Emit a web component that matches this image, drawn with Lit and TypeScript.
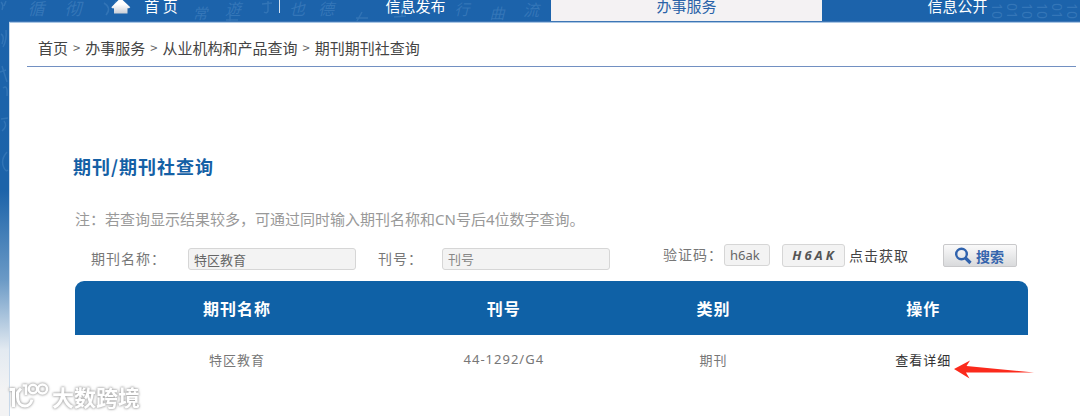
import { LitElement, html, css, svg } from "lit";
import { customElement, state } from "lit/decorators.js";

interface Row {
  name: string;
  code: string;
  kind: string;
}

// Faint calligraphy scattered over the blue backdrop: glyph, x, y, size
const SCRIPT: [string, number, number, number][] = [
  ["循", 36, 15, 17], ["彻", 73, 15, 17], ["常", 200, 19, 15],
  ["遊", 233, 15, 16], ["也", 297, 15, 16], ["德", 326, 15, 16],
  ["行", 462, 15, 15], ["曲", 497, 19, 15], ["流", 531, 16, 16],
];

// Brush strokes of the characters that run off the side strip
const STROKES = [
  "M1 2Q4 5 2 10M6 1 4 6",
  "M1 34Q5 36 2 44M6 30Q7 40 3 47",
  "M2 66 7 82M0 72 6 70M3 88Q8 84 7 96",
  "M1 119 8 118M4 121Q8 126 2 131",
  "M7 152Q0 160 4 168Q6 172 8 170",
  "M104 3Q112 8 106 15M116 1 113 9",
  "M262 4 272 3M268 1V11Q267 14 264 12",
  "M356 18H368M362 12 357 21",
  "M392 6Q398 4 396 14M402 4V17M394 17 406 16",
  "M226 20H238M230 15V21",
];

const BINARY: [string, number][] = [
  ["10", 997], ["01", 1012], ["10", 1027], ["10", 1042], ["01", 1057], ["10", 1072],
];

@customElement("app-root")
export class AppRoot extends LitElement {
  @state() private active = 2;

  private nav = ["首 页", "信息发布", "办事服务", "信息公开"];
  private rows: Row[] = [{ name: "特区教育", code: "44-1292/G4", kind: "期刊" }];

  static styles = css`
    :host {
      position: relative;
      min-height: 100vh;
      padding-left: 9px;
      box-sizing: border-box;
      overflow: hidden;
      display: flex;
      flex-direction: column;
      font-family: "Noto Sans", "Noto Sans CJK SC", sans-serif;
      color: #777;
      background: linear-gradient(#1c63ab 0, #1c63a9 190px, #6b9ac6 280px, #e3eaf1 350px, #f3f3f4 390px);
    }
    a { color: inherit; text-decoration: none; }
    .backdrop {
      position: absolute;
      left: 0;
      top: 0;
      width: 100%;
      height: 200px;
      pointer-events: none;
    }
    .backdrop text { fill: #7fb0e0; fill-opacity: 0.26; text-anchor: middle; }
    .backdrop path { fill: none; stroke: #7fb0e0; stroke-opacity: 0.22; stroke-width: 1.5; }
    .nav {
      position: relative;
      display: grid;
      grid-template-columns: repeat(4, 1fr);
      margin-right: -13px;
      border-bottom: 1px solid #3d76b5;
      font-family: "Noto Sans CJK SC", sans-serif;
      font-size: 15px;
      line-height: 12px;
      color: #fff;
    }
    .item {
      display: flex;
      justify-content: center;
      gap: 13px;
      padding-bottom: 9px;
    }
    .item:first-child { background: linear-gradient(#d5e3f2, #d5e3f2) right top / 1px 13px no-repeat; }
    .item.on { background: #f4f2f3; color: #2a62a8; }
    .house { width: 20px; height: 15px; margin-bottom: -3px; }
    .sheet {
      position: relative;
      flex: 1;
      background: #fff;
      border-left: 1px solid #c9daec;
      border-top: 1px solid #a9c6e4;
    }
    .crumbs {
      display: flex;
      gap: 5px;
      margin: 0 4px 0 17px;
      padding: 13px 11px 6px;
      border-bottom: 1px solid #7290c2;
      font-family: "Noto Sans CJK SC", sans-serif;
      font-size: 15px;
      line-height: 24px;
      color: #444;
    }
    .sep { font-size: 13px; color: #666; }
    .main { margin: 0 52px 0 65px; padding-top: 85px; }
    h1 {
      margin: 0 0 0 -2px;
      font-size: 18px;
      line-height: 28px;
      letter-spacing: 1px;
      color: #1460a5;
      font-family: "Noto Sans CJK SC", sans-serif;
    }
    .note {
      margin: 27px 0 0;
      font-size: 15px;
      line-height: 24px;
      color: #999;
    }
    .form {
      display: flex;
      align-items: flex-start;
      justify-content: space-between;
      padding: 13px 11px 11px 16px;
      font-size: 14px;
      line-height: 22px;
      letter-spacing: 1px;
    }
    .fields { display: flex; padding-top: 4px; }
    .check { display: flex; }
    .long { width: 97px; }
    .short { width: 64px; margin-left: 22px; }
    .code { width: 61px; }
    input {
      box-sizing: border-box;
      width: 168px;
      height: 22px;
      margin: 0;
      padding: 0 5px;
      border: 1px solid #d6d6d6;
      border-radius: 3px;
      background: #f3f3f3;
      font: 13px "Noto Sans", "Noto Sans CJK SC", sans-serif;
      color: #666;
      outline: none;
    }
    input::placeholder { color: #888; opacity: 1; }
    .check input { width: 46px; }
    .captcha {
      box-sizing: border-box;
      width: 63px;
      height: 23px;
      margin: 0 4px 0 12px;
      padding-left: 2px;
      border: 1px solid #d6d6d6;
      border-radius: 3px;
      background: #f3f3f3;
      font: italic bold 13px/21px "Noto Sans", sans-serif;
      letter-spacing: 3px;
      text-align: center;
      color: #555;
    }
    button { margin: 0; padding: 0; border: 0; background: none; font: inherit; cursor: pointer; }
    .fetch { letter-spacing: 1px; color: #444; }
    .search {
      display: flex;
      align-items: center;
      gap: 4px;
      box-sizing: border-box;
      width: 74px;
      height: 23px;
      margin-left: 34px;
      padding-left: 10px;
      border: 1px solid #c9c9cb;
      border-radius: 2px;
      background: linear-gradient(#fafafa, #d9dadc);
      font: bold 14px/20px "Noto Sans CJK SC", sans-serif;
      color: #3564ad;
    }
    .glass { width: 18px; height: 18px; }
    table {
      width: 100%;
      border-collapse: collapse;
      table-layout: fixed;
      font-size: 13px;
      letter-spacing: 1px;
      text-align: center;
    }
    th, td { padding: 0; }
    th {
      height: 54px;
      background: #0f61a6;
      font-size: 16px;
      color: #fff;
    }
    th:first-child { width: 34%; border-top-left-radius: 9px; }
    th:last-child { border-top-right-radius: 9px; }
    td { height: 48px; }
    .detail { position: relative; color: #333; }
    .arrow {
      position: absolute;
      left: 100%;
      top: 8px;
      margin-left: 3px;
      width: 82px;
      height: 20px;
    }
    .mark {
      position: absolute;
      left: 8px;
      bottom: 5px;
      display: flex;
      align-items: center;
      gap: 2px;
      font: bold 22px/30px "Noto Sans CJK SC", sans-serif;
      color: #fff;
      filter: drop-shadow(0 0 1px #aaa) drop-shadow(0 0 1px #bbb);
    }
    .logo { width: 42px; height: 30px; }
  `;

  private link(text: string, i: number) {
    return html`<a
      class="item ${i === this.active ? "on" : ""}"
      href="#"
      @click=${() => (this.active = i)}
      >${i === 0
        ? html`<svg class="house" viewBox="0 0 20 15" aria-hidden="true">
            <defs>
              <linearGradient id="roof" x1="0" y1="0" x2="0" y2="1">
                <stop offset="0.4" stop-color="#fff" />
                <stop offset="1" stop-color="#c9ced6" />
              </linearGradient>
            </defs>
            <path d="M9.500-2 19.300 7.200 18 8.200H16.500V13.500H3V8.200H1.300L.3 7.200Z" fill="url(#roof)" />
          </svg>`
        : null}<span>${text}</span></a
    >`;
  }

  render() {
    return html`
      <svg class="backdrop" aria-hidden="true">
        ${STROKES.map((d) => svg`<path d=${d} />`)}
        ${SCRIPT.map(
          ([g, x, y, s]) => svg`<text x=${x} y=${y} font-size=${s} font-style="italic">${g}</text>`
        )}
        ${BINARY.map(
          ([b, x]) => svg`<text transform="translate(${x - 5} 11) rotate(90)" font-size="14">${b}</text>`
        )}
      </svg>
      <nav class="nav">${this.nav.map((t, i) => this.link(t, i))}</nav>
      <div class="sheet">
        <div class="crumbs">
          <a href="#">首页</a><span class="sep">&gt;</span><a href="#">办事服务</a
          ><span class="sep">&gt;</span><a href="#">从业机构和产品查询</a
          ><span class="sep">&gt;</span><span>期刊期刊社查询</span>
        </div>
        <main class="main">
          <h1>期刊/期刊社查询</h1>
          <p class="note">注：若查询显示结果较多，可通过同时输入期刊名称和CN号后4位数字查询。</p>
          <form class="form" @submit=${(e: Event) => e.preventDefault()}>
            <div class="fields">
              <label class="long" for="name">期刊名称：</label>
              <input id="name" .value=${"特区教育"} />
              <label class="short" for="issn">刊号：</label>
              <input id="issn" placeholder="刊号" />
            </div>
            <div class="check">
              <label class="code" for="code">验证码：</label>
              <input id="code" .value=${"h6ak"} />
              <span class="captcha">H6AK</span>
              <button class="fetch" type="button">点击获取</button>
              <button class="search" type="submit">
                <svg class="glass" viewBox="0 0 18 18" aria-hidden="true">
                  <circle cx="7.500" cy="7" r="5.300" fill="none" stroke="#2f62ad" stroke-width="2.400" />
                  <path d="M11.500 11 16.500 16" stroke="#2f62ad" stroke-width="3.200" />
                </svg>
                搜索
              </button>
            </div>
          </form>
          <table>
            <thead>
              <tr><th>期刊名称</th><th>刊号</th><th>类别</th><th>操作</th></tr>
            </thead>
            <tbody>
              ${this.rows.map(
                (r) => html`<tr>
                  <td>${r.name}</td>
                  <td>${r.code}</td>
                  <td>${r.kind}</td>
                  <td>
                    <a class="detail" href="#">查看详细<svg class="arrow" viewBox="0 0 82 20" aria-hidden="true">
                        <path d="M0 10 16 1.500 12.500 7 80 13.500 12 13.500 15.500 19.500Z" fill="#fb2a1c" />
                      </svg></a>
                  </td>
                </tr>`
              )}
            </tbody>
          </table>
        </main>
      </div>
      <div class="mark">
        <svg class="logo" viewBox="0 0 42 30" fill="none" stroke="#fff" stroke-width="3" aria-hidden="true">
          <path d="M1.500 8.500H5.500V26" />
          <path d="M13 7.500 9.500 11.500V16C9.500 22 13 25 17 25C20.500 25 23 22.500 24 18.500" />
          <path d="M14.500 4.500H18V14" stroke-width="2.500" />
          <circle cx="25" cy="8" r="4.200" stroke-width="2.500" />
          <circle cx="34.500" cy="8" r="4.500" stroke-width="2.500" />
        </svg>
        <span>大数跨境</span>
      </div>
    `;
  }
}
